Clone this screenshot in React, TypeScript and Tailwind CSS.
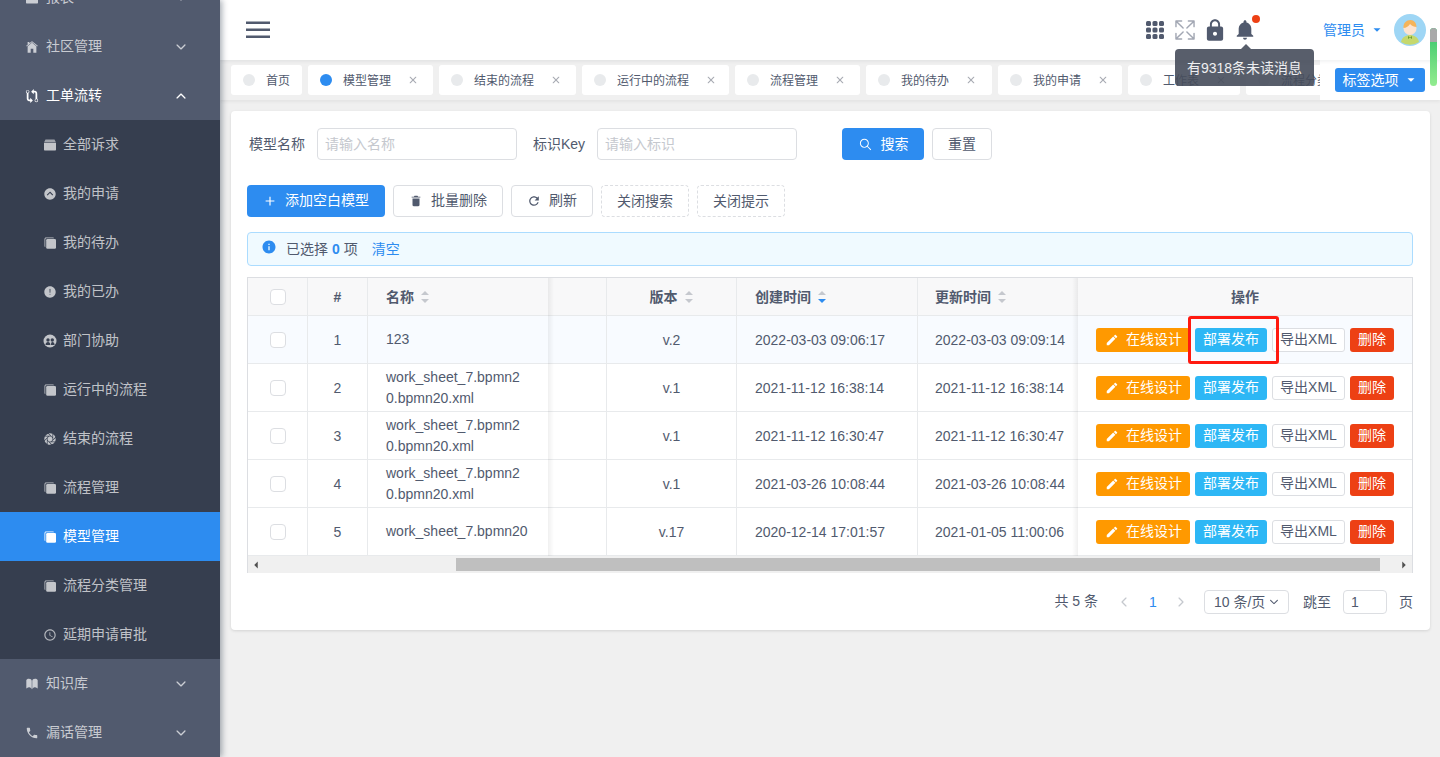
import React from 'react';
import {
  IoMdAdd, IoMdArrowDropdown, IoMdArrowDropup, IoMdCall, IoMdCreate, IoMdGitCompare, IoMdInformationCircle, IoMdLock,
  IoMdNotifications, IoMdRefresh, IoMdTime, IoMdTrash, IoIosAlert, IoIosAperture, IoIosArrowBack, IoIosArrowDown,
  IoIosArrowDropupCircle, IoIosArrowForward, IoIosArrowUp, IoIosBook, IoIosClose, IoIosExpand, IoIosHome, IoIosSearch,
  IoMdArrowDropleft, IoMdArrowDropright,
} from 'react-icons/io';

type IconProps = { size?: number; className?: string };

const CopyIcon = ({ size = 14, className }: IconProps) => (
  <svg width={size} height={size} viewBox="0 0 14 14" fill="currentColor" className={className}>
    <path d="M3 1.500h7c.6 0 1 .3 1.200.8H3.500c-.7 0-1.200.5-1.200 1.200v7.700c-.5-.2-.8-.6-.8-1.200V3c0-.8.7-1.500 1.500-1.500z" />
    <rect x="3.200" y="3" width="9.800" height="9.800" rx="1.300" />
  </svg>
);

const FilingIcon = ({ size = 14, className }: IconProps) => (
  <svg width={size} height={size} viewBox="0 0 14 14" fill="currentColor" className={className}>
    <path d="M2.500 1.500h9L13 4.500H1z" opacity="0.75" />
    <path d="M1 5h12v6.500c0 .6-.4 1-1 1H2c-.6 0-1-.4-1-1z" />
  </svg>
);

const PeopleCircleIcon = ({ size = 14, className }: IconProps) => (
  <svg width={size} height={size} viewBox="0 0 14 14" className={className}>
    <circle cx="7" cy="7" r="6.500" fill="currentColor" />
    <circle cx="5" cy="6" r="1.700" fill="#363e4f" />
    <circle cx="9.300" cy="6" r="1.700" fill="#363e4f" />
    <path d="M2.500 11c0-2 1.200-3 2.500-3s2.400 1 2.400 3zM8 11c0-2 .3-3 1.300-3 1.300 0 2.300 1 2.300 3z" fill="#363e4f" />
  </svg>
);

const AppsIcon = () => (
  <svg width="18" height="18" viewBox="0 0 18 18" fill="#515a6e">
    {[0, 6.500, 13].map((y) =>
      [0, 6.500, 13].map((x) => <rect key={`${x}-${y}`} x={x} y={y} width="5" height="5" rx="1.500" />),
    )}
  </svg>
);

const subMenu = [
  { label: '全部诉求', icon: FilingIcon },
  { label: '我的申请', icon: IoIosArrowDropupCircle },
  { label: '我的待办', icon: CopyIcon },
  { label: '我的已办', icon: IoIosAlert },
  { label: '部门协助', icon: PeopleCircleIcon },
  { label: '运行中的流程', icon: CopyIcon },
  { label: '结束的流程', icon: IoIosAperture },
  { label: '流程管理', icon: CopyIcon },
  { label: '模型管理', icon: CopyIcon, active: true },
  { label: '流程分类管理', icon: CopyIcon },
  { label: '延期申请审批', icon: IoMdTime },
];

const tabs = [
  { label: '模型管理', width: 'w-[125px]', active: true },
  { label: '结束的流程', width: 'w-[137px]' },
  { label: '运行中的流程', width: 'w-[147px]' },
  { label: '流程管理', width: 'w-[125px]' },
  { label: '我的待办', width: 'w-[126px]' },
  { label: '我的申请', width: 'w-[124px]' },
  { label: '工作表', width: 'w-[112px]' },
  { label: '流程分类管理', width: 'w-[147px]' },
];

const rows = [
  { id: 1, name: '123', version: 'v.2', created: '2022-03-03 09:06:17', updated: '2022-03-03 09:09:14' },
  { id: 2, name: 'work_sheet_7.bpmn2\n0.bpmn20.xml', version: 'v.1', created: '2021-11-12 16:38:14', updated: '2021-11-12 16:38:14' },
  { id: 3, name: 'work_sheet_7.bpmn2\n0.bpmn20.xml', version: 'v.1', created: '2021-11-12 16:30:47', updated: '2021-11-12 16:30:47' },
  { id: 4, name: 'work_sheet_7.bpmn2\n0.bpmn20.xml', version: 'v.1', created: '2021-03-26 10:08:44', updated: '2021-03-26 10:08:44' },
  { id: 5, name: 'work_sheet_7.bpmn20', version: 'v.17', created: '2020-12-14 17:01:57', updated: '2021-01-05 11:00:06' },
];

const NavGroup = ({ icon: Icon, label, open }: { icon: React.ElementType; label: string; open?: boolean }) => (
  <div className={`flex h-[49px] shrink-0 items-center pl-[25px] pr-[32px] ${open ? 'text-white' : 'text-white/70'}`}>
    <Icon size={14} className="shrink-0" />
    <span className="ml-[7px] flex-1 pb-[2px] text-sm">{label}</span>
    {open ? <IoIosArrowUp size={14} /> : <IoIosArrowDown size={14} />}
  </div>
);

const SortCaret = ({ active }: { active?: boolean }) => (
  <span className="ml-[6px] inline-flex w-[10px] flex-col items-center text-[#c5c8ce]">
    <IoMdArrowDropup size={16} className="-mb-[8px]" />
    <IoMdArrowDropdown size={16} className={active ? 'text-[#2d8cf0]' : ''} />
  </span>
);

const Checkbox = () => <span className="h-4 w-4 rounded-[4px] border border-[#dcdee2] bg-white" />;

const Avatar = () => (
  <svg width="32" height="32" viewBox="0 0 32 32">
    <circle cx="16" cy="16" r="16" fill="#9ed6f5" />
    <path d="M7 28c1-5 5-7 9-7s8 2 9 7a16 16 0 0 1-18 0z" fill="#c5d86d" />
    <path d="M14 22l2 1.500 2-1.500v3l-2-1.500-2 1.500z" fill="#6f9e2f" />
    <circle cx="16" cy="14.500" r="6.500" fill="#fde3cf" />
    <path d="M9.500 14c-.5-5 3-8 7-8 3.500 0 6 3 6 7-2 0-5-1-6.500-3-1 2-4 4-6.500 4z" fill="#f5b45a" />
  </svg>
);

const App = () => {
  return (
    <div className="relative flex h-screen overflow-hidden bg-[#f0f0f0] font-['Liberation_Sans','Noto_Sans_CJK_SC',sans-serif] text-sm text-[#515a6e]">
      {/* Sidebar */}
      <aside className="z-20 flex h-full w-[220px] shrink-0 flex-col overflow-hidden bg-[#515a6e] shadow-[2px_0_6px_rgba(0,21,41,0.35)]">
        <div className="-mt-[27px] flex flex-col">
          <NavGroup icon={FilingIcon} label="报表" />
          <NavGroup icon={IoIosHome} label="社区管理" />
          <NavGroup icon={IoMdGitCompare} label="工单流转" open />
          <div className="flex flex-col bg-[#363e4f]">
            {subMenu.map((item) => (
              <div
                key={item.label}
                className={`flex h-[49px] items-center pl-[43px] ${item.active ? 'bg-[#2d8cf0] text-white' : 'text-white/70'}`}
              >
                <item.icon size={14} className="shrink-0" />
                <span className="ml-[6px] pb-[2px]">{item.label}</span>
              </div>
            ))}
          </div>
          <NavGroup icon={IoIosBook} label="知识库" />
          <NavGroup icon={IoMdCall} label="漏话管理" />
        </div>
      </aside>

      <div className="flex min-w-0 flex-1 flex-col">
        {/* Header */}
        <header className="z-10 flex h-[60px] shrink-0 items-center bg-white pl-[26px] pr-[14px] shadow-[0_1px_4px_rgba(0,21,41,0.08)]">
          <svg width="24" height="18" viewBox="0 0 24 18" fill="#515a6e">
            <rect y="0.500" width="24" height="2.500" />
            <rect y="7.500" width="24" height="2.500" />
            <rect y="14.500" width="24" height="2.500" />
          </svg>
          <div className="ml-auto flex items-center">
            <AppsIcon />
            <IoIosExpand size={26} className="ml-[8px] text-[#a2a7b3]" />
            <IoMdLock size={26} className="ml-[4px]" />
            <IoMdNotifications size={24} className="ml-[5px]" />
            <span className="ml-[66px] text-[#2d8cf0]">管理员</span>
            <IoMdArrowDropdown size={14} className="ml-[5px] text-[#2d8cf0]" />
            <span className="ml-[10px] h-8 w-8">
              <Avatar />
            </span>
          </div>
        </header>

        {/* Tabs */}
        <div className="relative flex h-[40px] shrink-0 gap-[6px] overflow-hidden pl-[11px] pt-[5px] shadow-[0_2px_3px_rgba(0,0,0,0.05)]">
          <div className="flex h-[30px] w-[71px] shrink-0 items-center rounded-[3px] bg-white pl-3 text-xs">
            <span className="h-3 w-3 rounded-full bg-[#e8eaec]" />
            <span className="ml-[11px] pt-[2px]">首页</span>
          </div>
          {tabs.map((tab) => (
            <div key={tab.label} className={`flex h-[30px] shrink-0 items-center rounded-[3px] bg-white pl-3 text-xs ${tab.width}`}>
              <span className={`h-3 w-3 rounded-full ${tab.active ? 'bg-[#2d8cf0]' : 'bg-[#e8eaec]'}`} />
              <span className="ml-[11px] pt-[2px]">{tab.label}</span>
              <IoIosClose size={18} className="ml-[13px] text-[#a8abb3]" />
            </div>
          ))}
          <div className="absolute right-0 top-0 flex h-[40px] w-[120px] items-center bg-white pl-[15px]">
            <span className="flex h-6 w-[90px] items-center justify-center rounded-[3px] bg-[#2d8cf0] text-white">
              标签选项
              <IoMdArrowDropdown size={14} className="ml-[5px]" />
            </span>
          </div>
        </div>

        {/* Content card */}
        <main className="ml-[11px] mr-[10px] mt-[11px] rounded-[4px] bg-white pb-4 pl-4 pr-[17px] pt-[17px] shadow-[0_1px_3px_rgba(0,0,0,0.12)]">
          <div className="flex h-8 items-center">
            <label className="ml-[2px] w-[68px]">模型名称</label>
            <input placeholder="请输入名称" className="h-8 w-[200px] rounded-[4px] border border-[#dcdee2] px-[7px] outline-none placeholder:text-[#c5c8ce]" />
            <label className="ml-4 w-[64px]">标识Key</label>
            <input placeholder="请输入标识" className="h-8 w-[200px] rounded-[4px] border border-[#dcdee2] px-[7px] outline-none placeholder:text-[#c5c8ce]" />
            <button className="ml-[45px] flex h-8 w-[82px] items-center justify-center rounded-[4px] bg-[#2d8cf0] text-white">
              <IoIosSearch size={15} />
              <span className="ml-2">搜索</span>
            </button>
            <button className="ml-2 h-8 w-[60px] rounded-[4px] border border-[#dcdee2]">重置</button>
          </div>

          <div className="mt-[25px] flex h-8 items-center gap-2">
            <button className="flex h-8 w-[138px] items-center justify-center rounded-[4px] bg-[#2d8cf0] text-white">
              <IoMdAdd size={14} />
              <span className="ml-2 pb-[2px]">添加空白模型</span>
            </button>
            <button className="flex h-8 w-[110px] items-center justify-center rounded-[4px] border border-[#dcdee2]">
              <IoMdTrash size={14} />
              <span className="ml-2 pb-[2px]">批量删除</span>
            </button>
            <button className="flex h-8 w-[82px] items-center justify-center rounded-[4px] border border-[#dcdee2]">
              <IoMdRefresh size={14} />
              <span className="ml-2 pb-[2px]">刷新</span>
            </button>
            <button className="h-8 w-[88px] rounded-[4px] border border-dashed border-[#dcdee2]">关闭搜索</button>
            <button className="h-8 w-[88px] rounded-[4px] border border-dashed border-[#dcdee2]">关闭提示</button>
          </div>

          <div className="mt-[15px] flex h-[34px] items-center rounded-[4px] border border-[#abdcff] bg-[#f0faff] pl-[13px]">
            <IoMdInformationCircle size={16} className="-mt-[4px] text-[#2d8cf0]" />
            <span className="ml-[9px]">已选择</span>
            <span className="ml-1 font-bold text-[#2d8cf0]">0</span>
            <span className="ml-1">项</span>
            <span className="ml-[14px] text-[#2d8cf0]">清空</span>
          </div>

          {/* Table */}
          <div className="relative mt-[11px] border-x border-t border-[#dcdee2]">
            <div className="flex h-[38px] border-b border-[#e8eaec] bg-[#f8f8f9] font-bold">
              <div className="flex w-[60px] items-center justify-center border-r border-[#e8eaec]">
                <Checkbox />
              </div>
              <div className="flex w-[60px] items-center justify-center border-r border-[#e8eaec]">#</div>
              <div className="flex w-[180px] items-center pl-[18px]">
                名称
                <SortCaret />
              </div>
              <div className="w-[59px] border-r border-[#e8eaec]" />
              <div className="flex w-[130px] items-center justify-center border-r border-[#e8eaec]">
                版本
                <SortCaret />
              </div>
              <div className="flex w-[181px] items-center border-r border-[#e8eaec] pl-[18px]">
                创建时间
                <SortCaret active />
              </div>
              <div className="flex w-[160px] items-center pl-[17px]">
                更新时间
                <SortCaret />
              </div>
              <div className="flex flex-1 items-center justify-center">操作</div>
            </div>
            {rows.map((row, i) => (
              <div key={row.id} className={`flex h-[48px] border-b border-[#e8eaec] ${i === 0 ? 'bg-[#f8fbff]' : 'bg-white'}`}>
                <div className="flex w-[60px] items-center justify-center border-r border-[#e8eaec]">
                  <Checkbox />
                </div>
                <div className="flex w-[60px] items-center justify-center border-r border-[#e8eaec]">{row.id}</div>
                <div className="flex w-[180px] items-center whitespace-pre-line pl-[18px] leading-[21px]">{row.name}</div>
                <div className="w-[59px] border-r border-[#e8eaec]" />
                <div className="flex w-[130px] items-center justify-center border-r border-[#e8eaec]">{row.version}</div>
                <div className="flex w-[181px] items-center border-r border-[#e8eaec] pl-[18px]">{row.created}</div>
                <div className="flex w-[160px] items-center pl-[17px]">{row.updated}</div>
                <div className="flex flex-1 items-center justify-center gap-[5px]">
                  <button className="flex h-6 w-[94px] items-center rounded-[3px] bg-[#ff9900] pb-[2px] pl-[9px] text-white">
                    <IoMdCreate size={14} className="mt-[2px]" />
                    <span className="ml-[7px]">在线设计</span>
                  </button>
                  <button className="h-6 w-[72px] rounded-[3px] bg-[#2db7f5] pb-[2px] text-white">部署发布</button>
                  <button className="h-6 w-[73px] rounded-[3px] border border-[#dcdee2] bg-white pb-[2px]">导出XML</button>
                  <button className="h-6 w-[44px] rounded-[3px] bg-[#ed4014] pb-[2px] text-white">删除</button>
                </div>
              </div>
            ))}
            {/* horizontal scrollbar */}
            <div className="flex h-[17px] items-center bg-[#f0f0f0]">
              <IoMdArrowDropleft size={14} className="ml-[1px] w-[14px] text-[#505050]" />
              <div className="ml-[193px] h-[13px] w-[924px] bg-[#bfbfbf]" />
              <IoMdArrowDropright size={14} className="ml-auto mr-[1px] text-[#505050]" />
            </div>
            {/* shadows of the fixed columns */}
            <div className="pointer-events-none absolute bottom-[17px] left-[300px] top-0 w-[6px] bg-gradient-to-r from-black/[0.06] to-transparent" />
            <div className="pointer-events-none absolute bottom-[17px] right-[334px] top-0 w-[6px] bg-gradient-to-l from-black/[0.06] to-transparent" />
          </div>

          {/* Pagination */}
          <div className="mt-[17px] flex h-6 items-center justify-end">
            <span className="pb-[3px]">共 5 条</span>
            <IoIosArrowBack size={14} className="ml-[19px] text-[#c5c8ce]" />
            <span className="ml-[16px] w-[12px] text-center text-[#2d8cf0]">1</span>
            <IoIosArrowForward size={14} className="ml-[15px] text-[#c5c8ce]" />
            <div className="ml-[16px] flex h-6 w-[85px] items-center rounded-[4px] border border-[#dcdee2] pl-[9px]">
              10 条/页
              <IoIosArrowDown size={12} className="ml-[3px]" />
            </div>
            <span className="ml-[14px]">跳至</span>
            <input defaultValue="1" className="ml-[12px] h-6 w-[44px] rounded-[4px] border border-[#dcdee2] px-[7px] outline-none" />
            <span className="ml-[12px]">页</span>
          </div>
        </main>
      </div>

      {/* Overlays: bell dot, tooltip, annotation box, page scrollbar */}
      <span className="absolute left-[1252px] top-[15px] z-30 h-2 w-2 rounded-full bg-[#ed4014]" />
      <div className="absolute left-[1175px] top-[49px] z-30 flex h-[37px] w-[139px] items-center justify-center rounded-[4px] bg-[#464c5b]/90 text-white/90">
        <span className="absolute -top-[5px] left-[66px] h-0 w-0 border-x-[5px] border-b-[5px] border-x-transparent border-b-[#464c5b]/90" />
        有9318条未读消息
      </div>
      <div className="absolute left-[1188px] top-[316px] z-30 h-[48px] w-[91px] rounded-[3px] border-[3px] border-[#ff1a10]" />
      <div className="absolute left-[1430px] top-[28px] z-30 h-[58px] w-[7px] overflow-hidden rounded-[4px] bg-gradient-to-b from-[#25c56b] to-[#93ec90]">
        <div className="h-[14px] bg-[#a9a9a9]" />
      </div>
    </div>
  );
};

export default App;
